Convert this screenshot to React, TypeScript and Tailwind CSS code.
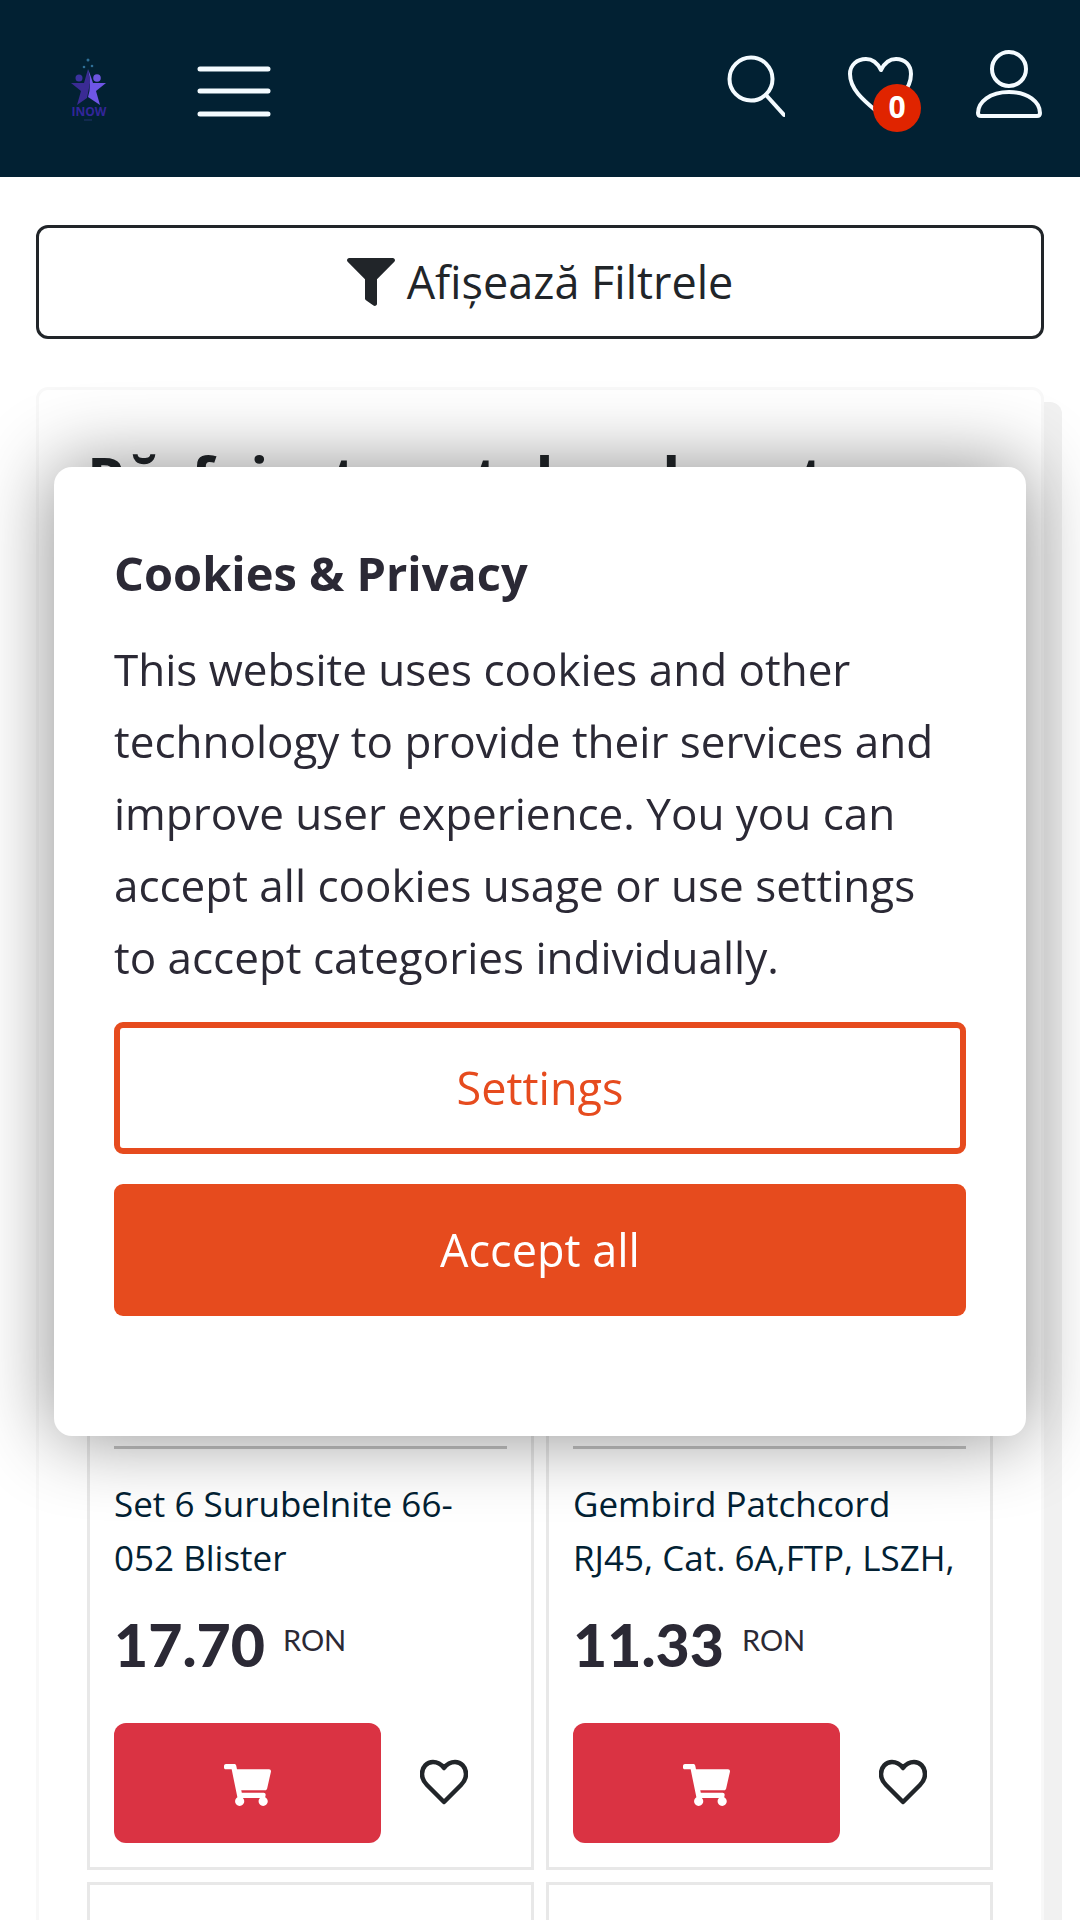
import { FaFilter, FaShoppingCart } from "react-icons/fa";

type Product = {
  name: string;
  price: string;
};

const products: Product[] = [
  { name: "Set 6 Surubelnite 66-052 Blister", price: "17.70" },
  { name: "Gembird Patchcord RJ45, Cat. 6A,FTP, LSZH,", price: "11.33" },
];

const Logo = () => (
  <svg width="36" height="64" viewBox="0 0 36 64" fill="none" aria-hidden="true">
    <g fill="#2f6f96">
      <circle cx="17" cy="3" r="1.5" />
      <circle cx="13" cy="10" r="1.3" />
      <circle cx="21" cy="9" r="1.3" />
    </g>
    <circle cx="8" cy="21" r="3.5" fill="#3b32a0" />
    <circle cx="26" cy="21" r="3.8" fill="#6d55e0" />
    <path d="M17 12 L13 26 L0 26 L10 34 L6 48 L16 41 L19 26 Z" fill="#3a2b94" />
    <path d="M17 12 L20 20 L22 26 L35 26 L25 34 L29 48 L17 40 Q21 28 17 12 Z" fill="#6f56e6" />
    <text
      x="18"
      y="59"
      textAnchor="middle"
      fontSize="12"
      fontWeight="700"
      fill="#33269a"
      fontFamily="Open Sans, sans-serif"
    >
      INOW
    </text>
    <path d="M13 63 H21" stroke="#23346e" strokeWidth="1" />
  </svg>
);

const Header = () => (
  <header className="flex h-[177px] items-center justify-between bg-[#022133] pr-[37px] pl-[71px]">
    <div className="flex items-center gap-[90px]">
      <a href="#home" aria-label="INOW">
        <Logo />
      </a>
      <button type="button" aria-label="Meniu">
        <svg width="74" height="56" viewBox="0 0 74 56" stroke="#f4fbff" strokeWidth="5" strokeLinecap="round">
          <path d="M3 8 H71 M3 30 H71 M3 53 H71" />
        </svg>
      </button>
    </div>
    <div className="flex items-center">
      <button type="button" aria-label="Caută" className="mr-[62px]">
        <svg width="60" height="74" viewBox="0 0 60 74" fill="none" stroke="#f4fbff" strokeWidth="4" strokeLinecap="round">
          <circle cx="26" cy="27" r="21.5" />
          <path d="M41 43 L59 63" />
        </svg>
      </button>
      <button type="button" aria-label="Favorite" className="relative mr-[62px]">
        <svg width="66" height="72" viewBox="0 0 66 72" fill="none" stroke="#f4fbff" strokeWidth="4" strokeLinejoin="round">
          <path d="M34 17 C30 9 25 6 19 6 C10 6 3 12 3 21 C3 38 20 50 34 62 C48 50 64 38 64 21 C64 12 58 6 49 6 C43 6 38 9 34 17 Z" />
        </svg>
        <span className="absolute top-[31px] left-[26px] flex size-12 items-center justify-center rounded-full bg-[#e02400] pb-[3px] text-[30px] font-bold text-white">
          0
        </span>
      </button>
      <button type="button" aria-label="Contul meu">
        <svg width="68" height="80" viewBox="0 0 68 80" fill="none" stroke="#f4fbff" strokeWidth="4" strokeLinejoin="round">
          <circle cx="34" cy="20" r="17" />
          <path d="M34 43 C15 43 3 53 3 64 C3 66 4 67 6 67 H62 C64 67 65 66 65 64 C65 53 53 43 34 43 Z" />
        </svg>
      </button>
    </div>
  </header>
);

const ProductCard = ({ name, price }: Product) => (
  <article className="border-3 border-[#e8e8e8] px-6 pb-6">
    <div className="h-[508px]" />
    <hr className="border-t-3 border-[#c4c4c4]" />
    <a href="#product" className="mt-7 block h-[108px] overflow-hidden text-[35px] leading-[54px] text-[#022133]">
      {name}
    </a>
    <p className="mt-6 flex items-start gap-[18px] font-[Lato] text-[#2b2935]">
      <strong className="text-[59px] leading-[72px] font-black">{price}</strong>
      <span className="text-[29px] leading-[62px] font-normal">RON</span>
    </p>
    <div className="mt-[42px] flex items-center">
      <button
        type="button"
        aria-label="Adaugă în coș"
        className="flex h-[120px] w-[68%] items-center justify-center rounded-xl bg-[#da3343] pt-1 text-white"
      >
        <FaShoppingCart className="h-[42px] w-[47px]" />
      </button>
      <button type="button" aria-label="Adaugă la favorite" className="ml-[39px] text-[#212529]">
        <svg width="48" height="48" viewBox="0 0 48 48" fill="none" stroke="currentColor" strokeWidth="4.5" strokeLinejoin="round">
          <path d="M24 9 C21 5 17 3 13 3 C7 3 2 8 2 15 C2 19 4 23 7 26 L24 43 L41 26 C44 23 46 19 46 15 C46 8 41 3 35 3 C31 3 27 5 24 9 Z" />
        </svg>
      </button>
    </div>
  </article>
);

const CookieDialog = () => (
  <div className="fixed inset-0 flex items-center justify-center px-[54px] pb-[18px]">
    <section
      role="dialog"
      aria-labelledby="cookie-title"
      className="w-full rounded-[18px] bg-white px-[60px] pt-[70px] pb-[120px] text-[#2b2935] shadow-[0_0_78px_rgba(2,2,3,0.45)]"
    >
      <h2 id="cookie-title" className="text-[47px] leading-[72px] font-bold">
        Cookies &amp; Privacy
      </h2>
      <p className="mt-6 text-[44px] leading-[72px]">
        This website uses cookies and other technology to provide their services and improve user experience. You you
        can accept all cookies usage or use settings to accept categories individually.
      </p>
      <div className="mt-[29px] flex flex-col gap-[30px] text-[45px]">
        <button type="button" className="h-[132px] rounded-[9px] border-6 border-[#e64b1e] text-[#e64b1e]">
          Settings
        </button>
        <button type="button" className="h-[132px] rounded-[9px] bg-[#e64b1e] text-white">
          Accept all
        </button>
      </div>
    </section>
  </div>
);

export default function App() {
  return (
    <div className="h-screen overflow-hidden bg-white font-['Open_Sans',sans-serif] text-[#212529]">
      <Header />
      <main className="px-9 pt-12">
        <button
          type="button"
          className="flex h-[114px] w-full items-center justify-center gap-3 rounded-xl border-3 border-[#212529] text-[45px]"
        >
          <FaFilter className="size-12" />
          Afișează Filtrele
        </button>
        <section className="mt-12 rounded-xl border-3 border-[#f8f8f8] bg-white px-12 pt-[51px] shadow-[18px_15px_0_#f1f1f1]">
          <h1 className="text-[59px] leading-[72px] font-bold">Răsfoiește catalogul nostru</h1>
          <div className="mt-[422px] grid grid-cols-2 gap-3">
            {products.map((product) => (
              <ProductCard key={product.name} {...product} />
            ))}
            <div className="h-[900px] border-3 border-[#e8e8e8]" />
            <div className="h-[900px] border-3 border-[#e8e8e8]" />
          </div>
        </section>
      </main>
      <CookieDialog />
    </div>
  );
}
